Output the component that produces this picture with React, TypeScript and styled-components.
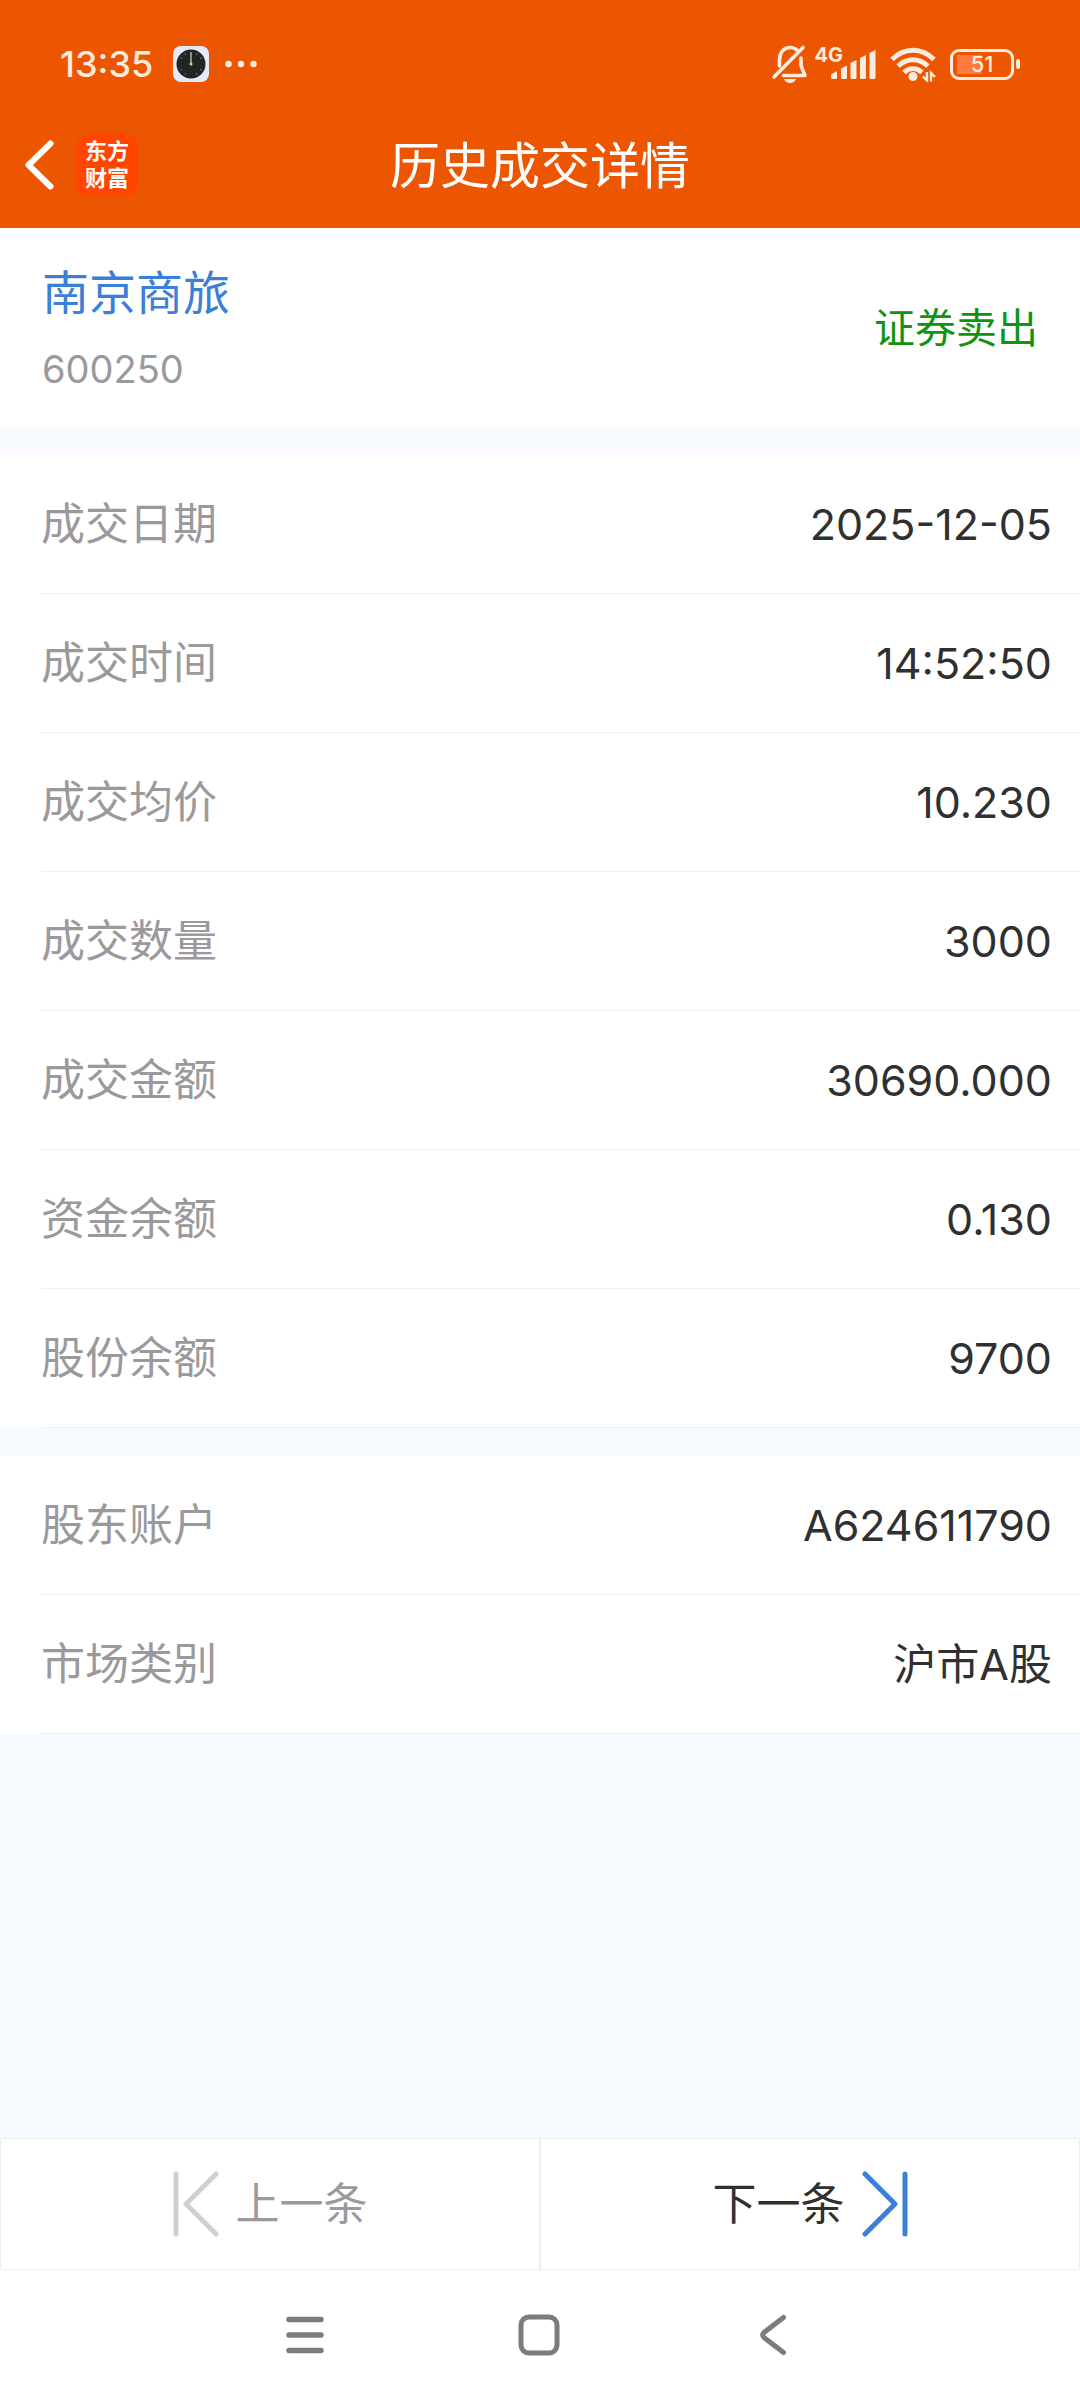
import React from "react";
import styled, { createGlobalStyle } from "styled-components";

const color = {
  brand: "#ed5600",
  logo: "#ff4500",
  status: "#ffebdd",
  page: "#f7faff",
  surface: "#ffffff",
  line: "#eeeeee",
  label: "#9b999b",
  text: "#303030",
  blue: "#3b80d7",
  green: "#109410",
  nav: "#7d7b7d",
};

const GlobalStyle = createGlobalStyle`
  *, *::before, *::after { box-sizing: border-box; }
  body {
    margin: 0;
    background: ${color.page};
    font-family: Inter, "Noto Sans CJK SC", sans-serif;
  }
  button { font: inherit; border: 0; padding: 0; background: none; cursor: pointer; }
  h1, h2, p, dl, dd, dt { margin: 0; font-weight: 400; }
  svg { display: block; flex: none; }
`;

const Page = styled.div`
  display: flex;
  flex-direction: column;
  min-height: 100vh;
`;

const Top = styled.header`
  background: ${color.brand};
`;

const StatusBar = styled.div`
  display: flex;
  justify-content: space-between;
  align-items: center;
  height: 102px;
  padding: 26px 60px 0;
  color: ${color.status};
`;

const StatusLeft = styled.div`
  display: flex;
  align-items: center;
  gap: 16px;
`;

const StatusRight = styled.div`
  display: flex;
  align-items: center;
  gap: 14px;
`;

const Time = styled.time`
  padding-right: 4px;
  font-size: 36px;
  line-height: 40px;
  font-weight: 500;
`;

const Signal = styled.div`
  display: flex;
  align-items: flex-start;
  height: 34px;
  margin-left: -8px;
`;

const Network = styled.span`
  font-size: 20px;
  line-height: 16px;
  font-weight: 700;
`;

const SignalBars = styled.svg`
  align-self: flex-end;
  margin: 0 0 2px -12px;
`;

const BatteryWrap = styled.div`
  display: flex;
  align-items: center;
  gap: 2px;
`;

const BatteryCell = styled.div`
  display: flex;
  align-items: center;
  justify-content: center;
  width: 64px;
  height: 31px;
  border: 3px solid ${color.status};
  border-radius: 9px;
  background: linear-gradient(90deg, #ff7a3c 50%, transparent 50%) 4px 3px / 50px 19px no-repeat;
  font-size: 22px;
  line-height: 24px;
  font-weight: 500;
`;

const BatteryTip = styled.span`
  width: 4px;
  height: 10px;
  border-radius: 2px;
  background: ${color.status};
`;

const TitleBar = styled.div`
  display: grid;
  grid-template-columns: 1fr auto 1fr;
  align-items: center;
  height: 126px;
  padding: 0 24px;
`;

const TitleLeft = styled.div`
  display: flex;
  align-items: center;
  gap: 22px;
`;

const IconButton = styled.button`
  display: flex;
  align-items: center;
  justify-content: center;
`;

const Logo = styled.div`
  display: grid;
  place-content: center;
  width: 62px;
  height: 62px;
  padding-bottom: 4px;
  border-radius: 14px;
  background: ${color.logo};
  color: #fff;
  font-family: "Noto Sans CJK SC", sans-serif;
  font-size: 22px;
  line-height: 27px;
  font-weight: 700;
`;

const Title = styled.h1`
  padding-top: 2px;
  color: #fff;
  font-size: 50px;
  line-height: 60px;
`;

const Summary = styled.section`
  display: flex;
  align-items: center;
  justify-content: space-between;
  height: 199px;
  padding: 0 42px;
  background: ${color.surface};
`;

const Stock = styled.div`
  padding-top: 6px;
`;

const StockName = styled.h2`
  color: ${color.blue};
  font-size: 47px;
  line-height: 76px;
`;

const StockCode = styled.p`
  color: ${color.label};
  font-size: 38px;
  line-height: 76px;
`;

const Side = styled.p`
  color: ${color.green};
  font-size: 41px;
  line-height: 60px;
`;

const Group = styled.dl`
  margin-top: 28px;
  padding-left: 41px;
  background: ${color.surface};
`;

const Row = styled.div`
  display: flex;
  align-items: center;
  justify-content: space-between;
  height: 139px;
  padding-right: 28px;
  border-bottom: 1px solid ${color.line};
  line-height: 60px;
`;

const Label = styled.dt`
  color: ${color.label};
  font-size: 44px;
`;

const Value = styled.dd`
  color: ${color.text};
  font-size: 43px;
`;

const Pager = styled.div`
  display: flex;
  margin-top: auto;
`;

const PagerButton = styled.button`
  flex: 1;
  display: flex;
  align-items: center;
  justify-content: center;
  gap: 17px;
  height: 132px;
  border: 1px solid ${color.line};
  background: ${color.surface};
  color: ${color.text};
  font-size: 44px;
  line-height: 60px;

  &:disabled {
    color: ${color.label};
    cursor: default;
  }
`;

const SystemNav = styled.nav`
  display: flex;
  justify-content: center;
  gap: 174px;
  height: 130px;
  padding-right: 2px;
  background: ${color.surface};
`;

const NavButton = styled(IconButton)`
  width: 60px;
`;

const trade = [
  ["成交日期", "2025-12-05"],
  ["成交时间", "14:52:50"],
  ["成交均价", "10.230"],
  ["成交数量", "3000"],
  ["成交金额", "30690.000"],
  ["资金余额", "0.130"],
  ["股份余额", "9700"],
];

const account = [
  ["股东账户", "A624611790"],
  ["市场类别", "沪市A股"],
];

function Details({ items }: { items: string[][] }) {
  return (
    <Group>
      {items.map(([label, value]) => (
        <Row key={label}>
          <Label>{label}</Label>
          <Value>{value}</Value>
        </Row>
      ))}
    </Group>
  );
}

const ticks = [30, 60, 120, 150, 210, 240, 300, 330];

function ClockIcon() {
  return (
    <svg width="36" height="36" viewBox="0 0 36 36" aria-hidden="true">
      <rect width="36" height="36" rx="8" fill="#e6e9f6" />
      <circle cx="18" cy="18" r="14.5" fill="#222426" />
      {ticks.map((a) => (
        <circle key={a} cx="18" cy="6.5" r="0.6" fill="#aaa" transform={`rotate(${a} 18 18)`} />
      ))}
      <path d="M18 6v12" stroke="#aaa" strokeWidth="1.6" />
      <circle cx="18" cy="18" r="1.5" fill="#ccc" />
    </svg>
  );
}

function DotsIcon() {
  return (
    <svg width="32" height="8" viewBox="0 0 32 8" fill="currentColor" aria-hidden="true">
      <circle cx="3.5" cy="4" r="3.2" />
      <circle cx="16" cy="4" r="3.2" />
      <circle cx="28.5" cy="4" r="3.2" />
    </svg>
  );
}

function MutedBellIcon() {
  return (
    <svg width="36" height="40" viewBox="0 0 36 40" fill="none" stroke="currentColor" strokeWidth="3.6" strokeLinecap="round" strokeLinejoin="round" aria-hidden="true">
      <path d="M7.5 22V16C7.5 8.500 12 3.500 18 3.500C21 3.500 23.500 4.500 25.500 6.500" />
      <path d="M29 14V21.500L33 31.500H11.500" />
      <path d="M2 33L31 3.500" />
      <path d="M12 35H24C23 37.800 21 39 18 39S13 37.800 12 35Z" fill="currentColor" stroke="none" />
    </svg>
  );
}

function BarsIcon() {
  return (
    <SignalBars width="45" height="29" viewBox="0 0 45 29" fill="currentColor" aria-hidden="true">
      <path d="M0 24.500L6 21V27.500Q6 29 4.500 29H1.500Q0 29 0 27.500Z" />
      <path d="M10 18.500L16 15.500V27.500Q16 29 14.500 29H11.500Q10 29 10 27.500Z" />
      <path d="M19.500 13L25.500 10V27.500Q25.500 29 24 29H21Q19.500 29 19.500 27.500Z" />
      <path d="M29 8L35 5V27.500Q35 29 33.500 29H30.500Q29 29 29 27.500Z" />
      <path d="M38.500 3L44.500 0V27.500Q44.500 29 43 29H40Q38.500 29 38.500 27.500Z" />
    </SignalBars>
  );
}

function WifiIcon() {
  return (
    <svg width="46" height="36" viewBox="0 0 46 36" fill="none" stroke="currentColor" strokeWidth="5" aria-hidden="true">
      <path d="M2 13.500C14 1 32 1 44 13.500" />
      <path d="M8 20C17 11.500 29 11.500 38 20" />
      <path d="M14 26.500C19.500 21.500 26.500 21.500 32 26.500" />
      <circle cx="23" cy="30.500" r="4.500" fill="currentColor" stroke="none" />
      <path d="M37 26V34.500L33 30.500M41 35.500V27L45 31" strokeWidth="2.400" />
    </svg>
  );
}

export default function App() {
  return (
    <>
      <GlobalStyle />
      <Page>
        <Top>
          <StatusBar>
            <StatusLeft>
              <Time>13:35</Time>
              <ClockIcon />
              <DotsIcon />
            </StatusLeft>
            <StatusRight>
              <MutedBellIcon />
              <Signal>
                <Network>4G</Network>
                <BarsIcon />
              </Signal>
              <WifiIcon />
              <BatteryWrap>
                <BatteryCell>51</BatteryCell>
                <BatteryTip />
              </BatteryWrap>
            </StatusRight>
          </StatusBar>
          <TitleBar>
            <TitleLeft>
              <IconButton type="button" aria-label="返回">
                <svg width="30" height="50" viewBox="0 0 30 50" fill="none" stroke="#fff" strokeWidth="6" strokeLinecap="round" strokeLinejoin="round">
                  <path d="M26.500 3.500L4.500 25L26.500 46.500" />
                </svg>
              </IconButton>
              <Logo>
                <span>
                  东方
                  <br />
                  财富
                </span>
              </Logo>
            </TitleLeft>
            <Title>历史成交详情</Title>
          </TitleBar>
        </Top>

        <main>
          <Summary>
            <Stock>
              <StockName>南京商旅</StockName>
              <StockCode>600250</StockCode>
            </Stock>
            <Side>证券卖出</Side>
          </Summary>
          <Details items={trade} />
          <Details items={account} />
        </main>

        <Pager>
          <PagerButton type="button" disabled>
            <svg width="46" height="66" viewBox="0 0 46 66" fill="none" stroke="#d0d0d0" strokeWidth="5" strokeLinecap="round" strokeLinejoin="round">
              <path d="M3 3V63M43 3L13 33L43 63" />
            </svg>
            上一条
          </PagerButton>
          <PagerButton type="button">
            下一条
            <svg width="46" height="66" viewBox="0 0 46 66" fill="none" stroke={color.blue} strokeWidth="5" strokeLinecap="round" strokeLinejoin="round">
              <path d="M43 3V63M3 3L33 33L3 63" />
            </svg>
          </PagerButton>
        </Pager>

        <SystemNav>
          <NavButton type="button" aria-label="最近任务">
            <svg width="40" height="42" viewBox="0 0 40 42" fill="none" stroke={color.nav} strokeWidth="5.400" strokeLinecap="round">
              <path d="M4 5.500H36M4 21H36M4 36.500H36" />
            </svg>
          </NavButton>
          <NavButton type="button" aria-label="主屏幕">
            <svg width="42" height="42" viewBox="0 0 42 42" fill="none" stroke={color.nav} strokeWidth="5">
              <rect x="3" y="3" width="36" height="36" rx="8" />
            </svg>
          </NavButton>
          <NavButton type="button" aria-label="后退">
            <svg width="28" height="42" viewBox="0 0 28 42" fill="none" stroke={color.nav} strokeWidth="5" strokeLinecap="round">
              <path d="M24.500 3.500L5 18.500Q2.500 21 5 23.500L24.500 38.500" />
            </svg>
          </NavButton>
        </SystemNav>
      </Page>
    </>
  );
}
